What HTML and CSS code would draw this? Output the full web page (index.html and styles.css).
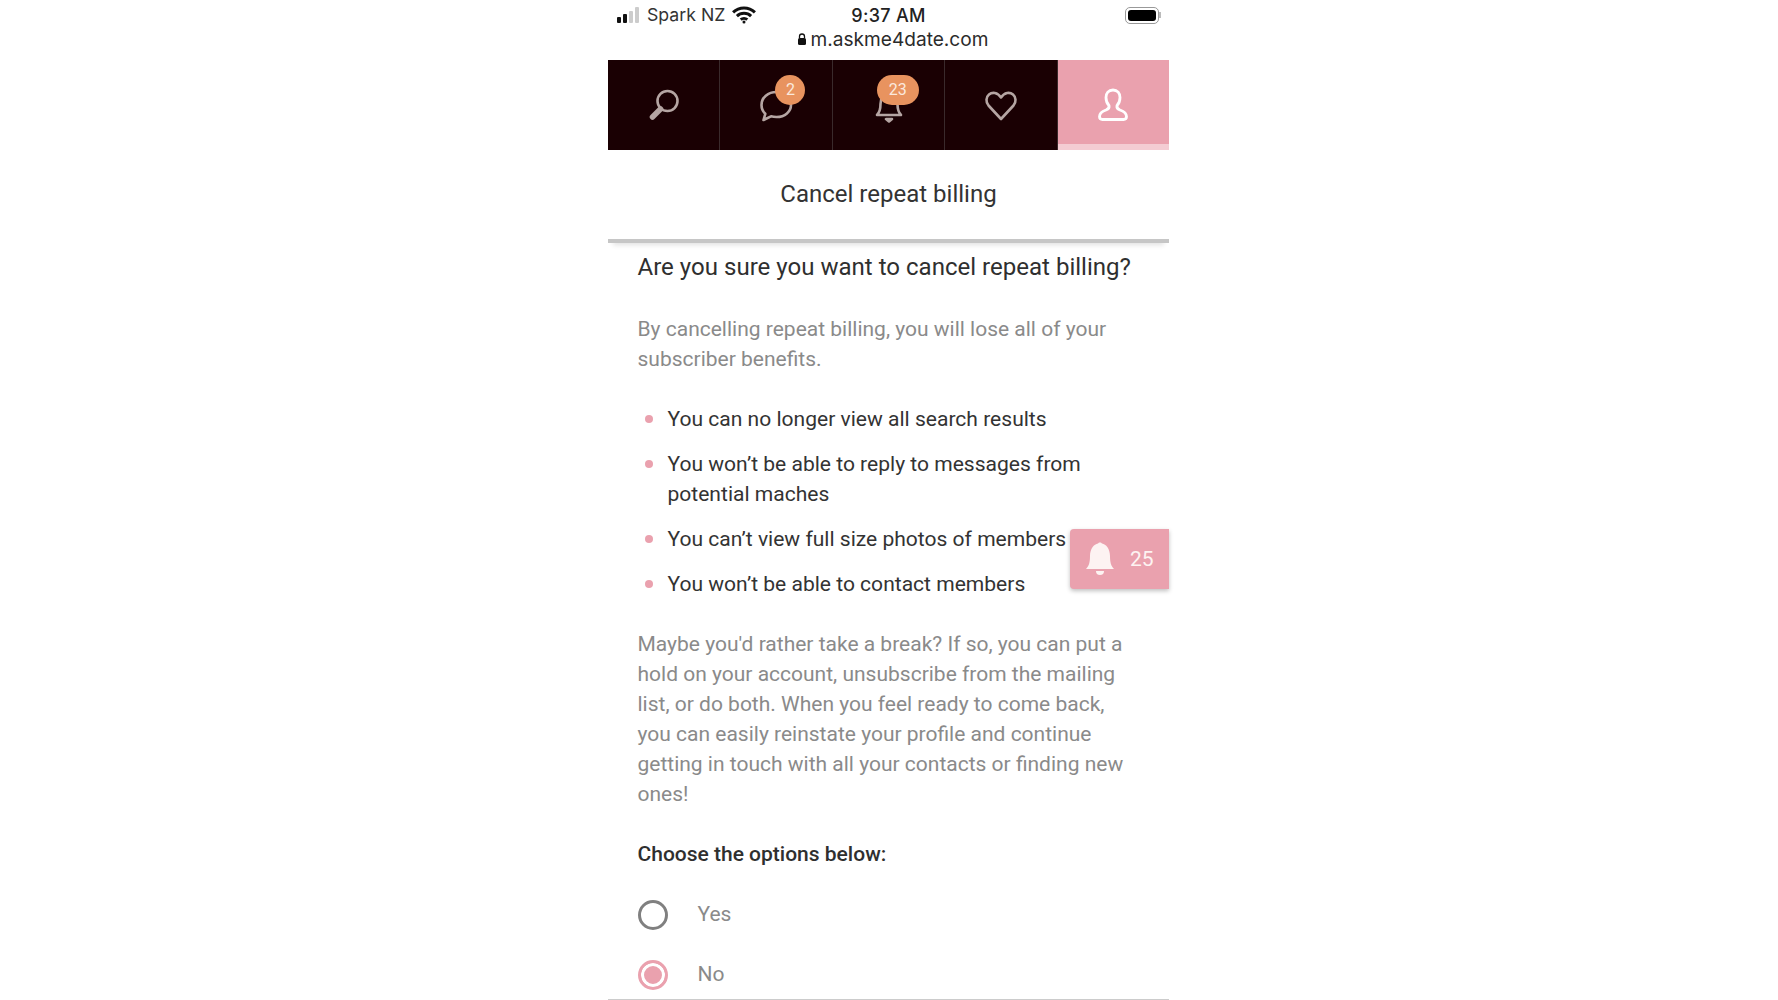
FILE: index.html
```html
<!DOCTYPE html>
<html lang="en">
<head>
    <meta charset="UTF-8">
    <meta name="viewport" content="width=device-width, initial-scale=1.0">
    <title>Cancel repeat billing</title>
    <link rel="stylesheet" href="styles.css">
</head>
<body>
    <div class="phone">
        <div class="status-bar">
            <div class="status-left">
                <svg class="signal" width="26" height="16" viewBox="0 0 26 16">
                    <rect x="1" y="10" width="4" height="6" rx="1" fill="#111"/>
                    <rect x="7" y="7" width="4" height="9" rx="1" fill="#111"/>
                    <rect x="13" y="4" width="4" height="12" rx="1" fill="#ccc"/>
                    <rect x="19" y="0" width="4" height="16" rx="1" fill="#ccc"/>
                </svg>
                <span>Spark NZ</span>
                <svg class="wifi" width="24" height="18" viewBox="0 0 22 16" fill="none" stroke="#111" stroke-width="2.800">
                    <path d="M1 5.500a14.500 14.500 0 0 1 20 0"/>
                    <path d="M4.500 9a9.500 9.500 0 0 1 13 0"/>
                    <path d="M8 12.300a4.500 4.500 0 0 1 6 0"/>
                    <circle cx="11" cy="14.500" r="1.400" fill="#111" stroke="none"/>
                </svg>
            </div>
            <div class="status-time">9:37 AM</div>
            <div class="status-right">
                <div class="battery"><div class="battery-fill"></div></div>
            </div>
            <div class="url-row">
                <svg width="10" height="12" viewBox="0 0 10 12">
                    <path d="M2.500 5V3.500a2.500 2.500 0 0 1 5 0V5" fill="none" stroke="#111" stroke-width="1.300"/>
                    <rect x="1" y="5" width="8" height="7" rx="1.500" fill="#111"/>
                </svg>
                <span>m.askme4date.com</span>
            </div>
        </div>

        <nav class="nav">
            <div class="nav-item">
                <svg width="36" height="36" viewBox="0 0 36 36" fill="none" stroke="#b5a5a3" stroke-width="2.600">
                    <circle cx="21.500" cy="14" r="10"/>
                    <path d="M14.500 22L6.500 30" stroke-width="5.500" stroke-linecap="round"/>
                </svg>
            </div>
            <div class="nav-item">
                <svg width="36" height="36" viewBox="0 0 36 36" fill="none" stroke="#b5a5a3" stroke-width="2.600" stroke-linejoin="round">
                    <path d="M18.500 5C10 5 3.500 10.500 3.500 18c0 3.500 1.300 6.500 3.800 8.800L5.500 33l7.500-3.700c1.800.5 3.500.7 5.500.7C27 30 33 24.500 33 18S27 5 18.500 5z"/>
                </svg>
                <span class="badge badge-small">2</span>
            </div>
            <div class="nav-item">
                <svg width="36" height="36" viewBox="0 0 36 36" fill="none" stroke="#b5a5a3" stroke-width="2.600" stroke-linejoin="round">
                    <path d="M6 28c3-3 3.500-6 3.500-11 0-6 3-11 8.500-11s8.500 5 8.500 11c0 5 .5 8 3.500 11z"/>
                    <path d="M15 32h6l-3 2.500z" fill="#b5a5a3"/>
                </svg>
                <span class="badge badge-wide">23</span>
            </div>
            <div class="nav-item">
                <svg width="36" height="36" viewBox="0 0 36 36" fill="none" stroke="#b5a5a3" stroke-width="2.600" stroke-linejoin="round">
                    <path d="M18 32L5.500 18.500C2.500 15 3 10 6 7.500s8.500-2.500 12 3c3.500-5.500 9-5.500 12-3s3.500 7.500.5 11z"/>
                </svg>
            </div>
            <div class="nav-item nav-item-active">
                <svg width="36" height="36" viewBox="0 0 36 36" fill="none" stroke="#fff" stroke-width="2.800" stroke-linejoin="round">
                    <path d="M18 3c-4.500 0-7 3.500-7 7.500 0 3.500 1 6 3 8 .5 2-.5 3.500-3 4.500-3.500 1.300-6.500 3-6.500 6.500 0 2 1 3 3 3h21c2 0 3-1 3-3 0-3.500-3-5.200-6.500-6.500-2.500-1-3.500-2.500-3-4.500 2-2 3-4.500 3-8C25 6.500 22.500 3 18 3z"/>
                </svg>
            </div>
        </nav>

        <h1 class="page-title">Cancel repeat billing</h1>

        <main class="content">
            <h2 class="question">Are you sure you want to cancel repeat billing?</h2>
            <p class="muted intro">By cancelling repeat billing, you will lose all of your subscriber benefits.</p>

            <ul class="benefits">
                <li>You can no longer view all search results</li>
                <li>You won’t be able to reply to messages from potential maches</li>
                <li>You can’t view full size photos of members</li>
                <li>You won’t be able to contact members</li>
            </ul>

            <p class="muted">Maybe you'd rather take a break? If so, you can put a hold on your account, unsubscribe from the mailing list, or do both. When you feel ready to come back, you can easily reinstate your profile and continue getting in touch with all your contacts or finding new ones!</p>

            <p class="options-label">Choose the options below:</p>

            <div class="option">
                <span class="radio"></span>
                <span class="option-text">Yes</span>
            </div>
            <div class="option">
                <span class="radio radio-on"></span>
                <span class="option-text">No</span>
            </div>
        </main>

        <div class="float-bell">
            <svg width="30" height="36" viewBox="0 0 30 36">
                <path d="M1 28c3-3 4-7 4-13C5 8 9 3 13 2.500 13.500 1 16.500 1 17 2.500 21 3 25 8 25 15c0 6 1 10 4 13z" fill="#fdf3f2"/>
                <path d="M11 30h8a4 4 0 0 1-8 0z" fill="#fdf3f2"/>
            </svg>
            <span>25</span>
        </div>
    </div>
</body>
</html>
```

FILE: styles.css
```css
* {
    box-sizing: border-box;
    margin: 0;
    padding: 0;
}

body {
    background-color: #fff;
    color: #333;
    font-family: 'Roboto', 'Liberation Sans', sans-serif;
    height: 1000px;
    overflow: hidden;
}

.phone {
    position: relative;
    width: 561px;
    height: 1000px;
    margin-left: 608px;
    border-bottom: 1px solid #ccc;
}

/* status bar */
.status-bar {
    display: grid;
    grid-template-columns: 1fr auto 1fr;
    grid-template-rows: 20px 28px;
    height: 60px;
    padding: 5px 8px 0 8px;
    color: #222;
    font-family: 'Inter', 'Liberation Sans', sans-serif;
    font-size: 18px;
    line-height: 22px;
}

.status-left {
    display: flex;
    align-items: center;
    gap: 5px;
    font-size: 17.700px;
    color: #333;
}

.wifi {
    margin-left: 2px;
}

.status-time {
    font-weight: 500;
    font-size: 18px;
    letter-spacing: .3px;
}

.status-right {
    display: flex;
    justify-content: flex-end;
    align-items: center;
    padding-right: 2px;
}

.battery {
    position: relative;
    width: 34px;
    height: 17px;
    padding: 2px;
    border: 1px solid #999;
    border-radius: 5px;
}

.battery::after {
    content: "";
    position: absolute;
    right: -3px;
    top: 4px;
    width: 2px;
    height: 6px;
    background-color: #bbb;
}

.battery-fill {
    height: 100%;
    background-color: #000;
    border-radius: 3px;
}

.url-row {
    grid-column: 1 / 4;
    display: flex;
    justify-content: center;
    align-items: center;
    gap: 4px;
    margin-left: 8px;
    font-size: 19.100px;
    color: #2b2b2b;
}

/* top nav */
.nav {
    display: flex;
    height: 90px;
    background-color: #1a0003;
}

.nav-item {
    position: relative;
    flex: 1;
    display: flex;
    justify-content: center;
    align-items: center;
    border-right: 1px solid #3a2a2c;
}

.nav-item-active {
    background-color: #eaa1ae;
    border-right: 0;
    border-bottom: 6px solid #f4ccd3;
    padding-top: 6px;
}

.badge {
    position: absolute;
    top: 15px;
    height: 30px;
    background-color: #e8935f;
    color: #fbe9dd;
    border-radius: 15px;
    font-size: 16px;
    line-height: 30px;
    text-align: center;
}

.badge-small {
    left: 55px;
    width: 30px;
}

.badge-wide {
    left: 44px;
    width: 42px;
}

/* page title */
.page-title {
    height: 93px;
    font-size: 24px;
    font-weight: 400;
    line-height: 88px;
    text-align: center;
    color: #333;
    border-bottom: 4px solid #c6c6c6;
    box-shadow: 0 7px 5px -5px rgba(0, 0, 0, 0.12);
}

/* content */
.content {
    padding: 9px 30px 0 29.500px;
    font-size: 21px;
    line-height: 30px;
}

.question {
    font-size: 24.050px;
    font-weight: 400;
    line-height: 30px;
    white-space: nowrap;
    color: #2f2f2f;
}

.muted {
    color: #8a8a8a;
}

.intro {
    margin-top: 32px;
}

.benefits {
    list-style: none;
    margin: 30px 0;
    font-size: 21.050px;
}

.benefits li {
    position: relative;
    padding-left: 30px;
    margin-bottom: 15px;
    color: #333;
}

.benefits li:last-child {
    margin-bottom: 0;
}

.benefits li::before {
    content: "";
    position: absolute;
    left: 7px;
    top: 11px;
    width: 8px;
    height: 8px;
    border-radius: 50%;
    background-color: #eaa1ae;
}

.options-label {
    margin-top: 30px;
    font-weight: 500;
    color: #2f2f2f;
}

.option {
    display: flex;
    align-items: center;
    gap: 30px;
    height: 30px;
    margin-top: 30px;
}

.radio {
    position: relative;
    top: 1px;
    width: 30px;
    height: 30px;
    border: 3px solid #808080;
    border-radius: 50%;
}

.radio-on {
    border-color: #eaa1ae;
    background-color: #eaa1ae;
    box-shadow: inset 0 0 0 3px #fff;
}

.option-text {
    color: #8a8a8a;
}

/* floating notification tab */
.float-bell {
    position: absolute;
    right: 0;
    top: 529px;
    display: flex;
    align-items: center;
    gap: 15px;
    width: 99px;
    height: 60px;
    padding-left: 15px;
    background-color: #eaa1ae;
    color: #fdf3f2;
    border-radius: 4px 0 0 4px;
    box-shadow: 0 2px 4px rgba(0, 0, 0, 0.25);
    font-size: 21px;
}
```
